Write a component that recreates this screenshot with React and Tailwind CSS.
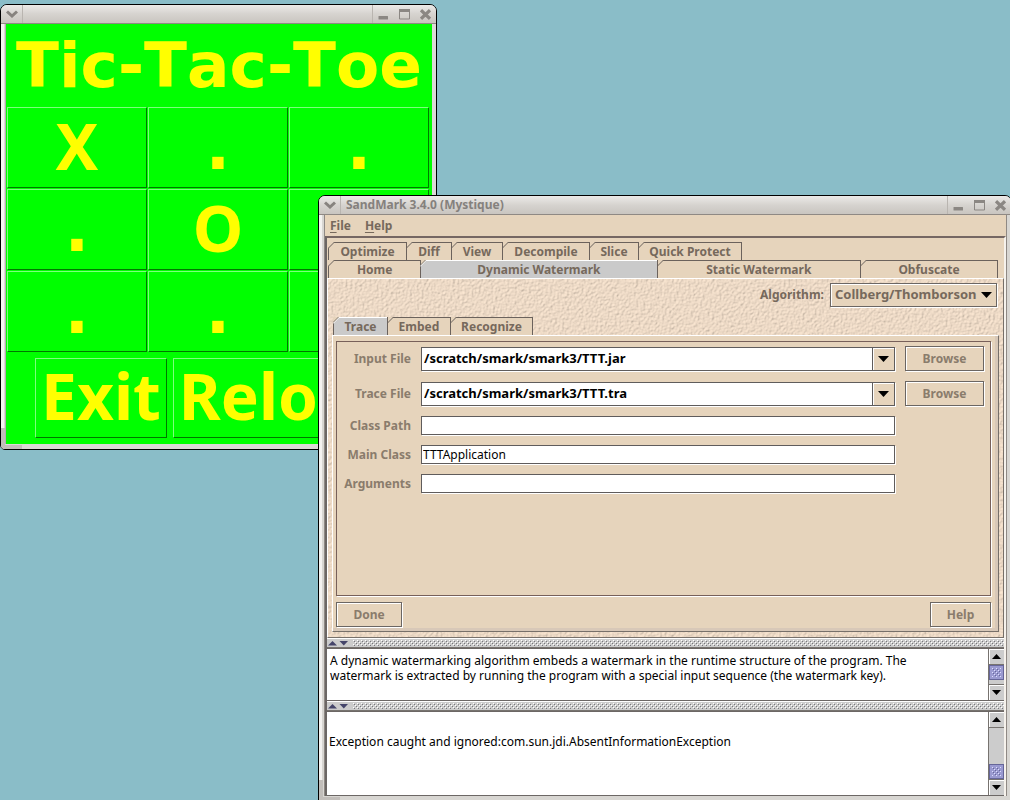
import { useState } from "react";

const cells = ["X", ".", ".", ".", "O", ".", ".", ".", "."];

function TitleBar({ title }) {
  return (
    <header className="flex h-[19px] shrink-0 items-stretch border-b border-[#8f8984] bg-linear-to-b from-[#eceae8] via-[#d6d3cf] to-[#c9c5c0]">
      <button aria-label="Window menu" className="flex w-[22px] items-center border-r border-[#b9b5b0] pl-[5px]">
        <svg width="12" height="8" viewBox="0 0 12 8" fill="none" stroke="#87837f" strokeWidth="3">
          <path d="M1 1.5 6 6 11 1.5" />
        </svg>
      </button>
      <h1 className="flex-1 truncate pl-[5px] text-[12px] leading-[18px] font-bold text-[#85817d]">{title}</h1>
      <div className="flex w-[64px] items-center gap-[10px] border-l border-[#b9b5b0] pl-[5px]">
        <button aria-label="Minimize">
          <svg width="11" height="11" viewBox="0 0 11 11" className="block">
            <rect x="0.5" y="7" width="9.5" height="3.5" rx="0.5" fill="#8b8783" />
          </svg>
        </button>
        <button aria-label="Maximize">
          <svg width="11" height="11" viewBox="0 0 11 11" className="block" fill="none" stroke="#8b8783">
            <path d="M.5 1v9h10V1" />
            <path d="M0 1.5h11" strokeWidth="3" />
          </svg>
        </button>
        <button aria-label="Close">
          <svg width="11" height="11" viewBox="0 0 11 11" className="block" stroke="#8b8783" strokeWidth="3.2">
            <path d="M1 1.2 10 9.8M10 1.2 1 9.8" />
          </svg>
        </button>
      </div>
    </header>
  );
}

function ResizeCorner() {
  return <div className="absolute bottom-0 left-0 h-[21px] w-[21px] border-b-[4px] border-l-[4px] border-[#c2beba]" />;
}

const bevel = "border border-t-[#7dff7d] border-l-[#7dff7d] border-r-[#007800] border-b-[#007800]";

function TicTacToe() {
  return (
    <section className="absolute top-[4px] left-0 w-[437px] overflow-hidden rounded-t-[7px] rounded-b-[5px] border border-black bg-[#dcd9d6] shadow-[inset_3px_0_0_#f6f4f3]">
      <TitleBar title="" />
      <ResizeCorner />
      <div className="pr-[4px] pb-[5px] pl-[4px]">
        <div className="border-l border-[#b7a9b0] bg-[#00ff00] text-[64px] font-bold text-[#ffff00]">
          <h2 className="text-center font-['DejaVu_Sans',sans-serif] text-[63px] leading-[83px] whitespace-nowrap [font-kerning:none]">
            Tic-Tac-Toe
          </h2>
          <div className="mr-[3px] ml-px grid grid-cols-3 gap-px">
            {cells.map((c, i) => (
              <button
                key={i}
                aria-label={`Square ${i + 1}`}
                className={`${bevel} h-[81px] ${c === "." ? "font-['DejaVu_Sans',sans-serif] leading-[79px]" : "pb-[4px] leading-[75px]"}`}
              >
                {c}
              </button>
            ))}
          </div>
          <div className="flex justify-center gap-[6px] pt-[6px] pb-[6px]">
            <button className={`${bevel} h-[80px] px-[5px] pb-[4px] leading-[74px]`}>Exit</button>
            <button className={`${bevel} h-[80px] px-[5px] pb-[4px] leading-[74px]`}>Reload</button>
          </div>
        </div>
      </div>
    </section>
  );
}

function Tab({ label, size, selected, first, last, onClick }) {
  return (
    <button
      role="tab"
      aria-selected={selected}
      onClick={onClick}
      className={`relative h-[18px] min-w-0 border-t border-l text-center text-[12px] leading-[17px] font-bold whitespace-nowrap text-[#76695c] ${
        selected ? "border-[#6b625c] border-t-white bg-[#cacaca]" : "border-[#6b625c] bg-[#e6d4bc]"
      } ${last ? "border-r" : ""} ${size}`}
    >
      <svg width="7" height="7" viewBox="0 0 7 7" className="absolute -top-px -left-px">
        <path d="M0 0H6.5L0 6.5Z" fill="#e6d4bc" />
        {!first && <path d="M.5 0V7" stroke="#6b625c" />}
        <path d="M0 6.5 6.5 0" stroke={selected ? "#ffffff" : "#6b625c"} />
        {selected && <path d="M0 5.5 5.5 0" stroke="#6b625c" strokeWidth="0.8" />}
      </svg>
      {label}
    </button>
  );
}

function Texture() {
  return (
    <svg aria-hidden="true" className="absolute inset-0 h-full w-full">
      <filter id="sand" x="0" y="0" width="100%" height="100%">
        <feTurbulence type="fractalNoise" baseFrequency="0.42" numOctaves="2" seed="4" result="n" />
        <feDiffuseLighting in="n" lightingColor="#efdcc8" surfaceScale="1" diffuseConstant="1.13">
          <feDistantLight azimuth="225" elevation="60" />
        </feDiffuseLighting>
      </filter>
      <rect width="100%" height="100%" fill="#e8d7c0" />
      <rect width="100%" height="100%" filter="url(#sand)" />
    </svg>
  );
}

const field = "w-full border border-[#5f5c5c] bg-white text-black outline-none shadow-[1px_1px_0_#fff]";
const metalButton =
  "h-[25px] border border-[#6b6663] bg-[#e6d4bc] text-[12px] font-bold text-[#8a7c6c] shadow-[1px_1px_0_#fff,inset_1px_1px_0_#fff]";

function Row({ id, label, combo, value, height }) {
  return (
    <>
      <label htmlFor={id} className="justify-self-end text-[12px] leading-[19px] font-bold whitespace-nowrap text-[#8a7c6c]">
        {label}
      </label>
      {combo ? (
        <div className="flex">
          <input id={id} defaultValue={value} className={`${field} ${height} min-w-0 flex-1 px-[2px] pb-[2px] text-[13px] font-bold`} />
          <button
            aria-label={`Show ${label} choices`}
            className="flex w-[22px] items-center justify-center border border-l-0 border-[#5f5c5c] bg-[#e6d4bc] shadow-[1px_1px_0_#fff,inset_1px_1px_0_#fff]"
          >
            <svg width="11" height="6" viewBox="0 0 11 6">
              <path d="M0 0H11L5.5 6Z" fill="#000" />
            </svg>
          </button>
        </div>
      ) : (
        <input id={id} defaultValue={value} className={`${field} ${height} px-px text-[12px]`} />
      )}
      {combo ? <button className={metalButton}>Browse</button> : <span />}
    </>
  );
}

function Divider({ id }) {
  return (
    <div role="separator" className="flex h-[10px] shrink-0 items-center gap-[5px] border-y border-t-white border-b-[#77736f] bg-[#cccccc] pl-px">
      <svg width="20" height="5" viewBox="0 0 20 5">
        <path d="M0 4.5 4.5 0 9 4.5Z" fill="#45456a" />
        <path d="M11.5 0H20L15.8 4.5Z" fill="#45456a" />
      </svg>
      <svg className="h-[6px] flex-1">
        <pattern id={id} width="4" height="4" patternUnits="userSpaceOnUse">
          <rect width="1" height="1" fill="#fff" />
          <rect x="1" y="1" width="1" height="1" fill="#77777c" />
          <rect x="2" y="2" width="1" height="1" fill="#fff" />
          <rect x="3" y="3" width="1" height="1" fill="#77777c" />
        </pattern>
        <rect width="100%" height="6" fill={`url(#${id})`} />
      </svg>
    </div>
  );
}

function ScrollBar({ children }) {
  return (
    <div className="flex w-[16px] shrink-0 flex-col border-l border-[#77736f] bg-[#cccccc]">
      <button aria-label="Scroll up" className="flex h-[16px] items-center justify-center border-b border-[#77736f] shadow-[inset_1px_1px_0_#fff]">
        <svg width="9" height="5" viewBox="0 0 9 5">
          <path d="M0 5 4.5 0 9 5Z" />
        </svg>
      </button>
      <div className="flex min-h-0 flex-1 flex-col">{children}</div>
      <button aria-label="Scroll down" className="flex h-[16px] items-center justify-center border-t border-[#77736f] shadow-[inset_1px_1px_0_#fff]">
        <svg width="9" height="5" viewBox="0 0 9 5">
          <path d="M0 0H9L4.5 5Z" />
        </svg>
      </button>
    </div>
  );
}

function Thumb({ id }) {
  return (
    <div className="h-[15px] shrink-0 border border-[#666699] bg-[#9a9ad0] p-[2px]">
      <svg className="block h-[9px] w-full">
        <pattern id={id} width="4" height="4" patternUnits="userSpaceOnUse">
          <rect width="1" height="1" fill="#ddddff" />
          <rect x="1" y="1" width="1" height="1" fill="#666699" />
          <rect x="2" y="2" width="1" height="1" fill="#ddddff" />
          <rect x="3" y="3" width="1" height="1" fill="#666699" />
        </pattern>
        <rect width="100%" height="9" fill={`url(#${id})`} />
      </svg>
    </div>
  );
}

function SandMark() {
  const [page, setPage] = useState("Dynamic Watermark");
  const [step, setStep] = useState("Trace");
  const upper = [
    ["Optimize", "w-[78px]"],
    ["Diff", "w-[45px]"],
    ["View", "w-[51px]"],
    ["Decompile", "w-[87px]"],
    ["Slice", "w-[49px]"],
    ["Quick Protect", "w-[104px]"],
  ];
  const lower = [
    ["Home", "grow-92 basis-0"],
    ["Dynamic Watermark", "grow-237 basis-0"],
    ["Static Watermark", "grow-204 basis-0"],
    ["Obfuscate", "grow-137 basis-0"],
  ];
  const steps = [
    ["Trace", "w-[54px]"],
    ["Embed", "w-[63px]"],
    ["Recognize", "w-[83px]"],
  ];
  return (
    <section className="absolute top-[195px] -right-[2px] -bottom-[2px] left-[318px] flex min-w-[640px] flex-col overflow-hidden rounded-t-[7px] border border-black bg-[#d8d6d2] shadow-[inset_3px_0_0_#f4f2f0]">
      <TitleBar title="SandMark 3.4.0 (Mystique)" />
      <ResizeCorner />
      <div className="mr-[4px] mb-[5px] ml-[5px] flex min-h-0 flex-1 flex-col border-x border-[#8f8984] bg-[#e6d4bc]">
        <nav className="flex h-[21px] shrink-0 gap-[14px] pl-[5px] text-[12px] leading-[21px] font-bold text-[#76695c]">
          <button>
            <span className="underline underline-offset-2">F</span>ile
          </button>
          <button>
            <span className="underline underline-offset-2">H</span>elp
          </button>
        </nav>
        <div className="flex min-h-0 flex-1 flex-col border-t-2 border-r-2 border-l-2 border-t-[#756763] border-r-[#f6f2ec] border-l-[#6c6765]">
          <div role="tablist" className="shrink-0 pt-[4px] pr-[6px] pl-px">
            <div className="flex">
              {upper.map(([t, s], i) => (
                <Tab key={t} label={t} size={s} first={i === 0} last={i === 5} selected={page === t} onClick={() => setPage(t)} />
              ))}
            </div>
            <div className="flex">
              {lower.map(([t, s], i) => (
                <Tab key={t} label={t} size={s} first={i === 0} last={i === 3} selected={page === t} onClick={() => setPage(t)} />
              ))}
            </div>
          </div>
          <div className="relative shrink-0 border border-t-white border-r-[#77706a] border-b-[#77706a] border-l-white">
            <Texture />
            <div className="relative px-[4px] pt-[4px] pb-[5px]">
              <div className="flex h-[24px] items-center justify-end gap-[6px] pr-[2px]">
                <label htmlFor="algorithm" className="text-[12px] font-bold text-[#76695c]">
                  Algorithm:
                </label>
                <div className="relative">
                  <select
                    id="algorithm"
                    className="block h-[24px] w-[167px] appearance-none border border-[#6b6663] bg-[#e6d4bc] pl-[4px] text-[13px] font-bold text-[#76695c] shadow-[1px_1px_0_#fff,inset_1px_1px_0_#fff]"
                  >
                    <option>Collberg/Thomborson</option>
                  </select>
                  <svg width="11" height="6" viewBox="0 0 11 6" className="pointer-events-none absolute top-[9px] right-[5px]">
                    <path d="M0 0H11L5.5 6Z" />
                  </svg>
                </div>
              </div>
              <div role="tablist" className="flex pt-[10px] pl-px">
                {steps.map(([t, s], i) => (
                  <Tab key={t} label={t} size={s} first={i === 0} last={i === 2} selected={step === t} onClick={() => setStep(t)} />
                ))}
              </div>
              <div className="border border-t-white border-r-[#77706a] border-b-[#77706a] border-l-white bg-[#e6d4bc] pt-[5px] pr-[7px] pb-[4px] pl-[3px] shadow-[inset_-3px_-3px_0_#d8c8b8]">
                <div className="min-h-[255px] border border-[#77605a] pt-[4px] pr-[6px] pl-[5px] shadow-[1px_1px_0_#fff]">
                  <div className="grid grid-cols-[69px_minmax(0,1fr)_79px] items-center gap-x-[10px] gap-y-[10px]">
                    <Row id="input-file" label="Input File" combo value="/scratch/smark/smark3/TTT.jar" height="h-[24px]" />
                    <Row id="trace-file" label="Trace File" combo value="/scratch/smark/smark3/TTT.tra" height="h-[24px]" />
                    <Row id="class-path" label="Class Path" value="" height="h-[19px]" />
                    <Row id="main-class" label="Main Class" value="TTTApplication" height="h-[19px]" />
                    <Row id="arguments" label="Arguments" value="" height="h-[19px]" />
                  </div>
                </div>
                <div className="flex justify-between pt-[6px]">
                  <button className={`${metalButton} w-[66px]`}>Done</button>
                  <button className={`${metalButton} w-[61px]`}>Help</button>
                </div>
              </div>
            </div>
          </div>
          <Divider id="grip-a" />
          <div className="flex h-[53px] shrink-0 border-t border-b border-[#6c6765] bg-white">
            <textarea
              readOnly
              aria-label="Description"
              className="min-w-0 flex-1 resize-none overflow-hidden pt-[4px] pl-[3px] text-[12px] leading-[15px] text-black outline-none"
              value={
                "A dynamic watermarking algorithm embeds a watermark in the runtime structure of the program. The\nwatermark is extracted by running the program with a special input sequence (the watermark key)."
              }
            />
            <ScrollBar>
              <Thumb id="thumb-a" />
            </ScrollBar>
          </div>
          <Divider id="grip-b" />
          <div className="flex min-h-0 flex-1 border-t border-b border-[#6c6765] bg-white">
            <textarea
              readOnly
              aria-label="Log"
              className="min-w-0 flex-1 resize-none overflow-hidden pt-[7px] pl-[2px] text-[12px] leading-[15px] text-black outline-none"
              value={"\nException caught and ignored:com.sun.jdi.AbsentInformationException"}
            />
            <ScrollBar>
              <div className="flex-1" />
              <Thumb id="thumb-b" />
            </ScrollBar>
          </div>
        </div>
      </div>
    </section>
  );
}

export default function App() {
  return (
    <main className="relative h-screen overflow-hidden bg-[#8abdc8] font-['Noto_Sans',sans-serif]">
      <TicTacToe />
      <SandMark />
    </main>
  );
}
